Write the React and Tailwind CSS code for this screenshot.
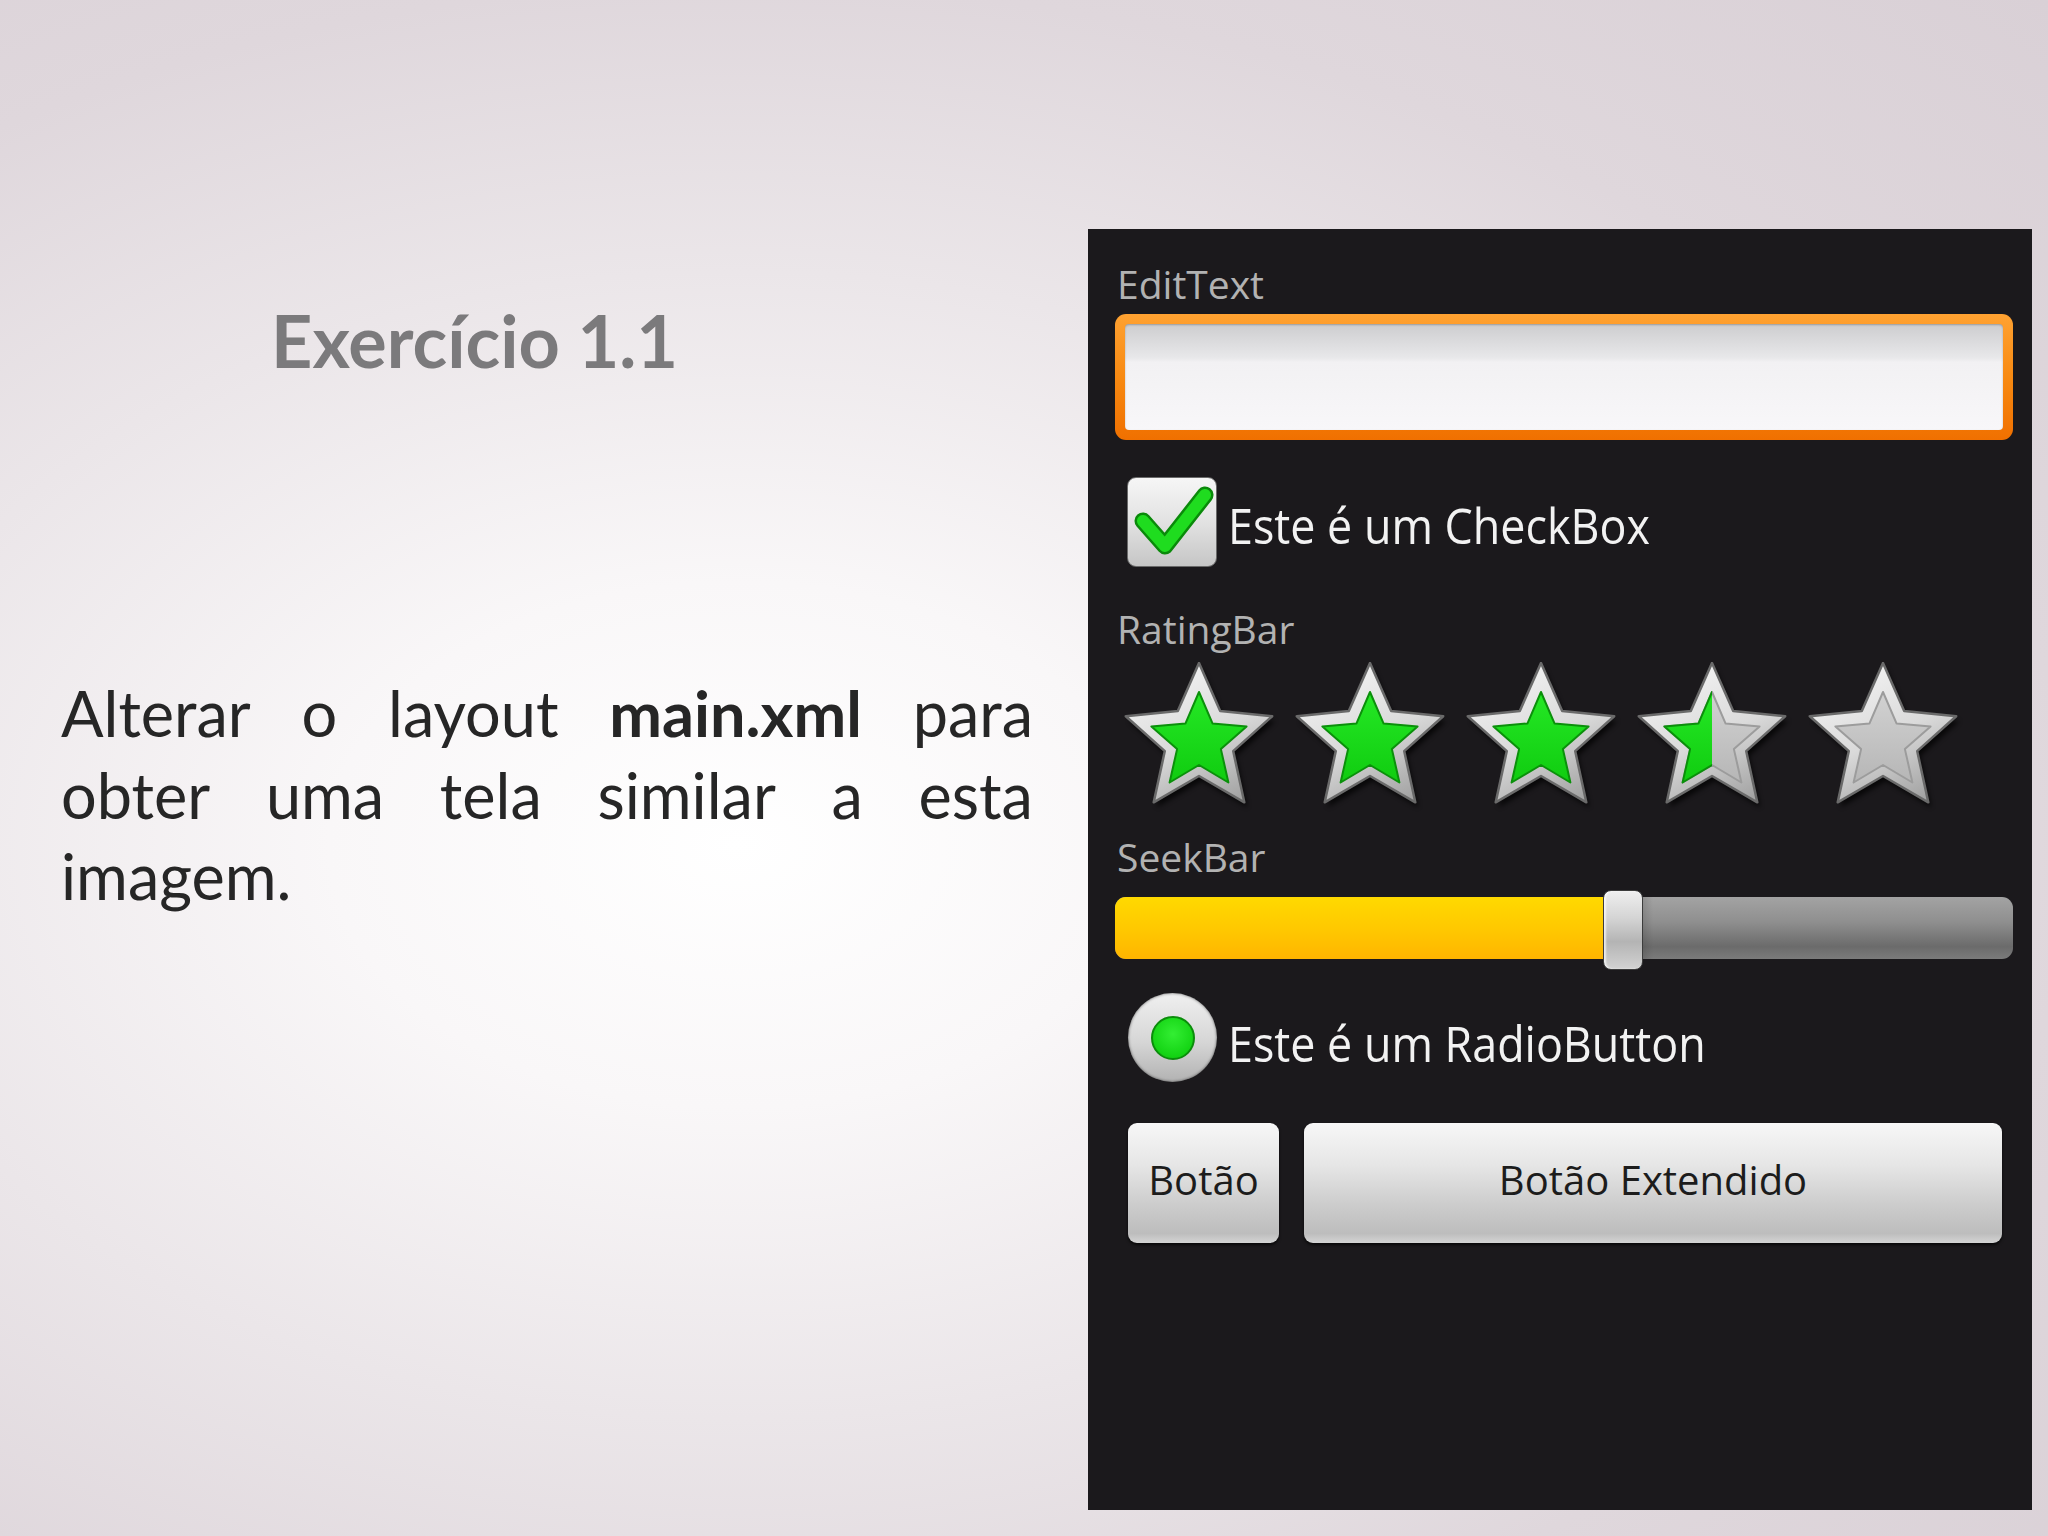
const starPts = (cx, cy, R, r) =>
  Array.from({ length: 10 }, (_, i) => {
    const a = ((-90 + i * 36) * Math.PI) / 180;
    const d = i % 2 ? r : R;
    return `${(cx + d * Math.cos(a)).toFixed(1)},${(cy + d * Math.sin(a)).toFixed(1)}`;
  }).join(" ");

const OUTER = starPts(80, 78, 77, 36);
const INNER = starPts(80, 80, 50, 23);

function Star({ kind, id }) {
  return (
    <svg width="160" height="150" viewBox="0 0 160 150" className="shrink-0">
      <defs>
        <linearGradient id={`silver${id}`} x1="0.2" y1="0" x2="0.7" y2="1">
          <stop offset="0" stopColor="#f6f6f6" />
          <stop offset="0.55" stopColor="#dadada" />
          <stop offset="1" stopColor="#a4a4a4" />
        </linearGradient>
        <linearGradient id={`green${id}`} x1="0" y1="0" x2="0" y2="1">
          <stop offset="0" stopColor="#25e825" />
          <stop offset="1" stopColor="#10cc10" />
        </linearGradient>
        <linearGradient id={`grey${id}`} x1="0" y1="0" x2="0" y2="1">
          <stop offset="0" stopColor="#d2d2d2" />
          <stop offset="1" stopColor="#b6b6b6" />
        </linearGradient>
        <clipPath id={`half${id}`}>
          <rect x="0" y="0" width="80" height="150" />
        </clipPath>
        <filter id={`blur${id}`} x="-20%" y="-20%" width="140%" height="140%">
          <feGaussianBlur stdDeviation="2.5" />
        </filter>
      </defs>
      <polygon points={OUTER} fill="#000" opacity="0.7" transform="translate(3,5)" filter={`url(#blur${id})`} />
      <polygon points={OUTER} fill={`url(#silver${id})`} stroke="#6a6a6a" strokeWidth="2.5" strokeLinejoin="round" />
      {kind === "full" ? (
        <polygon points={INNER} fill={`url(#green${id})`} stroke="#0b900b" strokeWidth="2" strokeLinejoin="round" />
      ) : (
        <polygon points={INNER} fill={`url(#grey${id})`} stroke="#9c9c9c" strokeWidth="2" strokeLinejoin="round" />
      )}
      {kind === "half" && (
        <polygon points={INNER} fill={`url(#green${id})`} stroke="#0b900b" strokeWidth="2" strokeLinejoin="round" clipPath={`url(#half${id})`} />
      )}
    </svg>
  );
}

const label = "ml-[2px] h-[39px] text-[39px] leading-[39px] text-[#b2b2b2]";
const bigText =
  "ml-[11px] inline-block origin-left scale-x-[0.915] whitespace-nowrap text-[49px] leading-[49px] text-[#f2f2f2]";
const button =
  "flex h-[120px] items-center justify-center rounded-[9px] bg-[linear-gradient(180deg,#f7f7f7_0%,#e6e6e6_35%,#cbcbcb_70%,#bdbdbd_92%,#d4d4d4_100%)] pb-[6px] text-[40px] leading-[40px] text-[#1c1c1c] shadow-[0_2px_3px_rgba(0,0,0,0.7)]";

export default function App() {
  return (
    <div className="flex min-h-[1536px] w-full bg-[radial-gradient(ellipse_at_36%_55%,#ffffff_0%,#f9f7f8_22%,#ebe6e9_48%,#dfd7dc_72%,#d9d0d6_100%)]">
      <div className="w-[1088px] shrink-0 pt-[304px] font-['Lato',sans-serif]">
        <h1 className="pl-[271px] text-[72px] font-bold leading-[72px] text-[#7b7a7c]">
          Exercício 1.1
        </h1>
        <div className="ml-[61px] mt-[296px] w-[972px] text-[63px] leading-[81.6px] text-[#262626]">
          <div className="flex justify-between">
            <span>Alterar</span>
            <span>o</span>
            <span>layout</span>
            <span className="font-bold">main.xml</span>
            <span>para</span>
          </div>
          <div className="flex justify-between">
            <span>obter</span>
            <span>uma</span>
            <span>tela</span>
            <span>similar</span>
            <span>a</span>
            <span>esta</span>
          </div>
          <div>imagem.</div>
        </div>
      </div>

      <div className="mt-[229px] flex h-[1281px] w-[944px] shrink-0 flex-col bg-[#1b191c] pl-[27px] pr-[19px] pt-[35px] font-['Open_Sans',sans-serif]">
        <div className={label}>EditText</div>
        <div className="mt-[11px] h-[126px] w-[898px] rounded-[11px] bg-[linear-gradient(180deg,#ffa232_0%,#f88a12_50%,#f07000_100%)] p-[10px]">
          <div className="h-full rounded-[4px] bg-[linear-gradient(180deg,#cdcdcf_0%,#e8e8ea_32%,#f2f1f3_36%,#f8f7f9_100%)] shadow-[inset_0_1px_2px_rgba(0,0,0,0.25)]" />
        </div>

        <div className="mt-[37px] flex h-[90px] items-start">
          <div className="ml-[12px] h-[90px] w-[90px] shrink-0 rounded-[9px] border border-[#6a6a6a] bg-[linear-gradient(180deg,#f6f6f6_0%,#e2e2e2_50%,#c6c6c6_100%)]">
            <svg width="88" height="88" viewBox="0 0 88 88" className="overflow-visible">
              <polyline points="15,43 37,68 77,17" fill="none" stroke="#0a8a0a" strokeWidth="17" strokeLinecap="round" strokeLinejoin="round" />
              <polyline points="15,43 37,68 77,17" fill="none" stroke="#1fdc1f" strokeWidth="12" strokeLinecap="round" strokeLinejoin="round" />
            </svg>
          </div>
          <span className={`${bigText} mt-[24px]`}>Este é um CheckBox</span>
        </div>

        <div className={`${label} mt-[42px]`}>RatingBar</div>
        <div className="ml-[4px] mt-[14px] flex gap-[11px]">
          <Star kind="full" id="a" />
          <Star kind="full" id="b" />
          <Star kind="full" id="c" />
          <Star kind="half" id="d" />
          <Star kind="empty" id="e" />
        </div>

        <div className={`${label} mt-[25px]`}>SeekBar</div>
        <div className="relative mt-[14px] h-[80px] w-[898px]">
          <div className="mt-[7px] flex h-[62px] overflow-hidden rounded-[11px] bg-[linear-gradient(180deg,#a3a3a3_0%,#8f8f8f_40%,#6b6b6b_80%,#7b7b7b_100%)]">
            <div className="h-full w-[508px] bg-[linear-gradient(180deg,#ffd900_0%,#ffc900_50%,#ffb500_100%)]" />
            <div className="h-full w-[30px] bg-[linear-gradient(90deg,rgba(0,0,0,0.35),rgba(0,0,0,0))]" />
          </div>
          <div className="absolute left-[488px] top-0 h-[80px] w-[40px] rounded-[8px] border border-[#3c3c3c] bg-[linear-gradient(180deg,#efefef_0%,#d4d4d4_35%,#b4b4b4_65%,#d2d2d2_100%)] shadow-[inset_2px_0_2px_rgba(255,255,255,0.7)]" />
        </div>

        <div className="mt-[23px] flex h-[90px] items-start">
          <div className="ml-[13px] flex h-[89px] w-[89px] shrink-0 items-center justify-center rounded-full bg-[linear-gradient(180deg,#f0f0f0_0%,#d6d6d6_55%,#b2b2b2_100%)] shadow-[inset_0_0_3px_rgba(0,0,0,0.6)]">
            <div className="h-[44px] w-[44px] rounded-full border-2 border-[#0b8d0b] bg-[radial-gradient(circle_at_50%_40%,#33ee33_0%,#14d414_70%,#0fb70f_100%)]" />
          </div>
          <span className={`${bigText} mt-[26px]`}>Este é um RadioButton</span>
        </div>

        <div className="mt-[40px] flex gap-[25px]">
          <div className={`${button} ml-[13px] w-[151px]`}>Botão</div>
          <div className={`${button} w-[698px]`}>Botão Extendido</div>
        </div>
      </div>
    </div>
  );
}
